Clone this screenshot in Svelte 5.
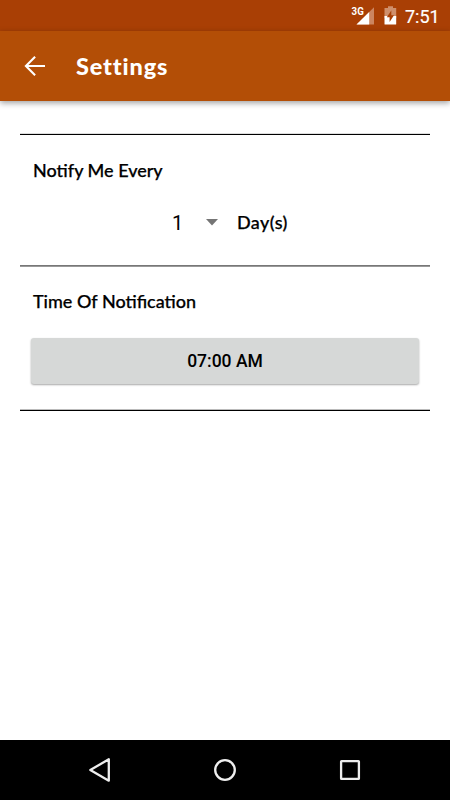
<script>
  let days = $state(1);
  let time = $state('07:00 AM');
</script>

<div class="screen">
  <div class="status">
    <svg class="signal" width="24" height="20" viewBox="0 0 24 20">
      <path d="M23 1.2V18.5H5.5Z" fill="#cc8560" />
      <path d="M18.2 6V18.5H5.5Z" fill="#fff" />
      <text x="0.6" y="8.7" textLength="12.2" lengthAdjust="spacingAndGlyphs">3G</text>
    </svg>
    <svg class="battery" width="13" height="20" viewBox="0 0 13 20">
      <path d="M4 0.2H9V2H12.2V12H0.5V2H4Z" fill="#cf8f6c" />
      <path d="M0.5 10H12.2V17.9Q12.2 18.5 11.6 18.5H1.1Q.5 18.5 .5 17.9Z" fill="#fff" />
      <path d="M7.3 4.5L2.8 11.2H5.6V16L10 9.2H7.3Z" fill="#a93f05" />
    </svg>
    <span class="clock">7:51</span>
  </div>
  <header>
    <svg width="22" height="22" viewBox="0 0 22 22" fill="none" stroke="#fff" stroke-width="2.1">
      <path d="M11.1 1.7L1.9 11L11.1 20.3M2 11H21" />
    </svg>
    <h1>Settings</h1>
  </header>
  <main>
    <div class="rule first"></div>
    <section class="every">
      <h2>Notify Me Every</h2>
      <div class="picker">
        <span class="num">{days}</span>
        <svg width="12" height="7" viewBox="0 0 12 7"><path d="M0 0H12L6 6.5Z" fill="#757575" /></svg>
        <span class="unit">Day(s)</span>
      </div>
    </section>
    <div class="rule middle"></div>
    <section class="time">
      <h2>Time Of Notification</h2>
      <button>{time}</button>
    </section>
    <div class="rule last"></div>
  </main>
  <nav>
    <svg width="24" height="26" viewBox="0 0 24 26"><path d="M20.8 2.3V23.7L2.3 13Z" /></svg>
    <svg width="24" height="26" viewBox="0 0 24 26"><circle cx="12" cy="13" r="9.8" /></svg>
    <svg width="24" height="26" viewBox="0 0 24 26"><rect x="3.1" y="4.1" width="17.8" height="17.8" rx=".4" /></svg>
  </nav>
</div>

<style>
  .screen {
    width: 450px;
    height: 800px;
    display: flex;
    flex-direction: column;
    background: #fff;
    color: #000;
    overflow: hidden;
    font-family: Lato, sans-serif;
  }
  .status {
    height: 31px;
    box-sizing: border-box;
    flex: none;
    display: flex;
    justify-content: flex-end;
    align-items: flex-start;
    padding: 6px 10px 0 0;
    background: #a93f05;
    color: #fff;
  }
  .signal text { font: 700 10.5px Roboto, sans-serif; fill: #fff; }
  .battery { margin: 0 8px 0 9px; }
  .clock { font: 400 18px/22px Roboto, sans-serif; width: 35px; white-space: nowrap; -webkit-text-stroke: 0.2px #fff; }
  header {
    height: 70px;
    flex: none;
    display: flex;
    align-items: center;
    padding-left: 24px;
    gap: 30px;
    background: #b34e06;
    box-shadow: 0 2px 6px rgba(0, 0, 0, 0.38);
    color: #fff;
  }
  h1 { margin: 0; font-size: 23.5px; line-height: 30px; font-weight: 900; letter-spacing: 0.85px; }
  main { flex: 1; padding: 32px 20px 0; }
  section { box-sizing: border-box; padding: 23px 11px 0; }
  .rule { height: 2px; }
  .first { background: linear-gradient(#ddd 50%, #000 50%); }
  .last { background: linear-gradient(#bbb 50%, #000 50%); }
  .middle { background: linear-gradient(#777 50%, #999 50%); }
  .every { height: 130px; }
  .time { height: 142px; padding-top: 22px; }
  h2 { margin: 0 0 0 2px; font-size: 18px; line-height: 24px; font-weight: 500; white-space: nowrap; -webkit-text-stroke: 0.25px #000; }
  .picker { display: flex; align-items: center; height: 30px; padding-left: 141px; margin-top: 25px; }
  .num { font: 400 20px/30px Roboto, sans-serif; width: 34px; padding-top: 1px; }
  .unit { margin-left: 19px; font-size: 18px; line-height: 24px; font-weight: 500; letter-spacing: 0.4px; -webkit-text-stroke: 0.25px #000; }
  button {
    display: block;
    width: 388px;
    height: 46px;
    margin-top: 25px;
    padding: 0;
    border: 0;
    border-radius: 3px;
    background: #d6d8d7;
    box-shadow: 0 1px 2px rgba(0, 0, 0, 0.35);
    color: #000;
    font: 500 17.5px/46px Roboto, sans-serif;
  }
  nav {
    height: 60px;
    flex: none;
    display: flex;
    justify-content: center;
    align-items: center;
    gap: 101px;
    background: #000;
  }
  nav svg { fill: none; stroke: #eee; stroke-width: 2.3; stroke-linejoin: round; }
</style>
